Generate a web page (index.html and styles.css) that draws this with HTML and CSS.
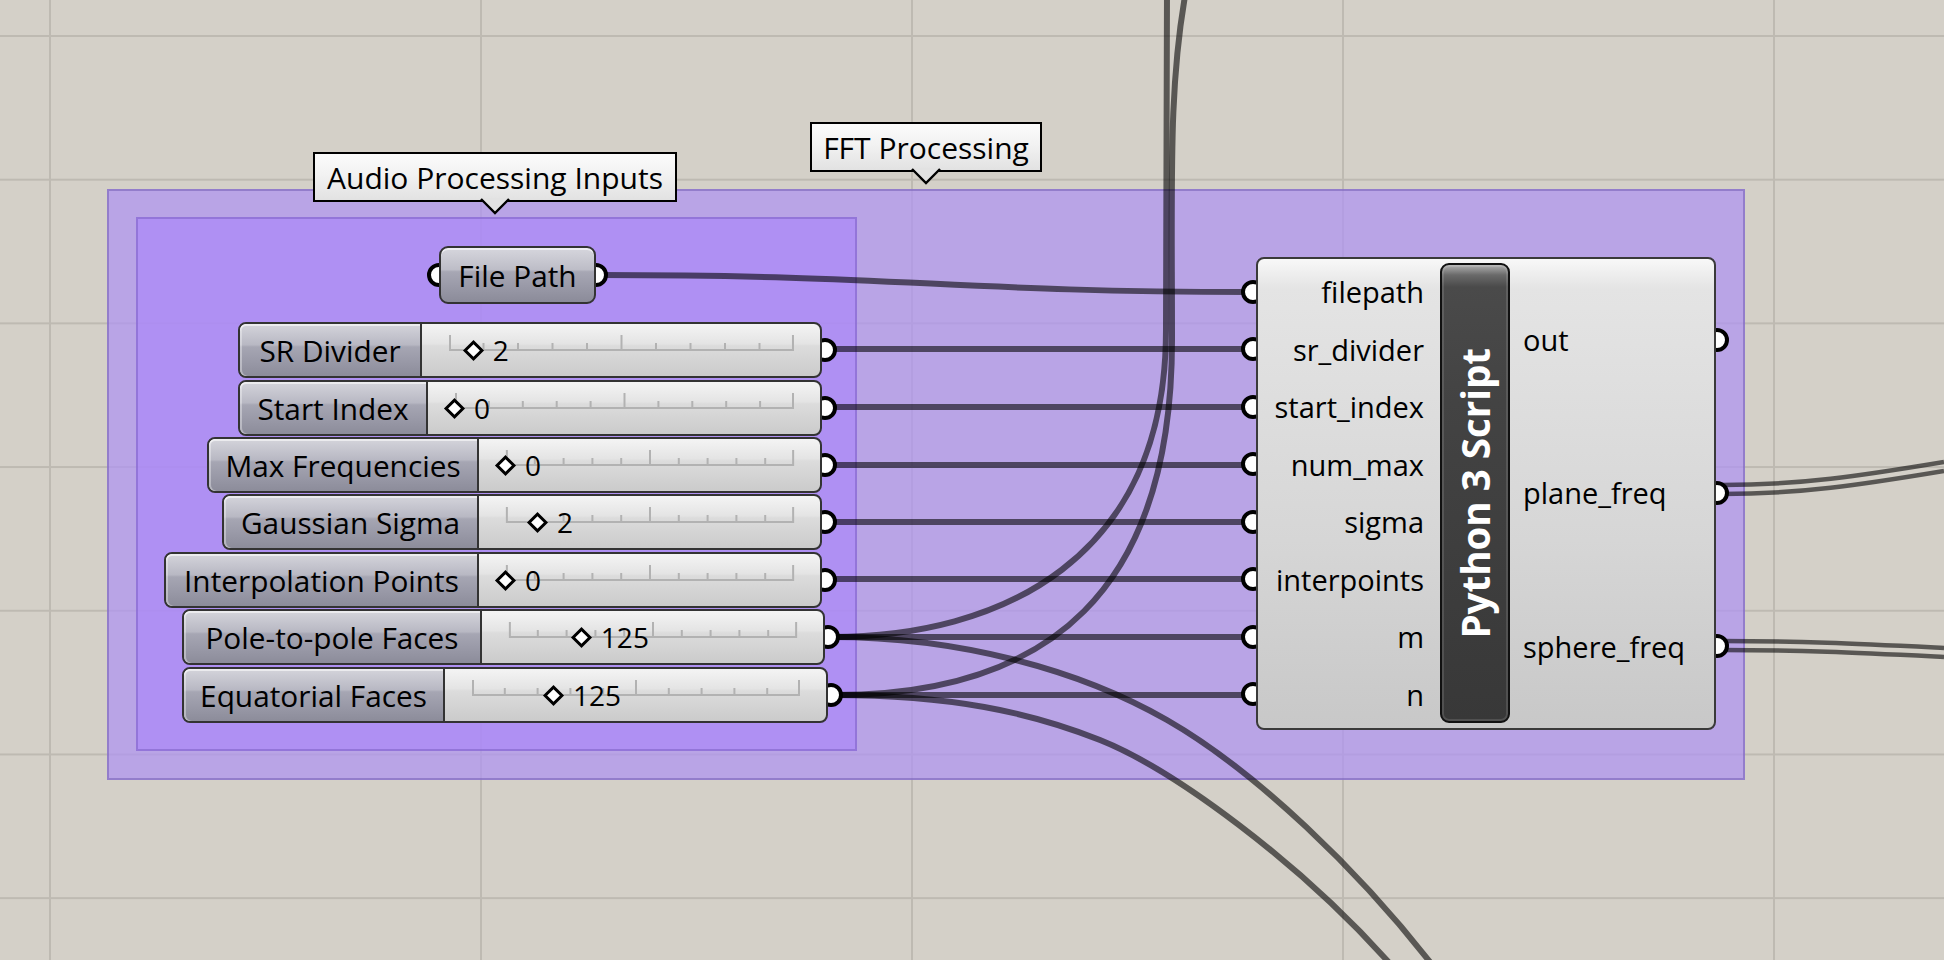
FILE: index.html
```html
<!DOCTYPE html>
<html lang="en">
<head>
<meta charset="utf-8">
<title>Grasshopper canvas</title>
<link rel="stylesheet" href="styles.css">
</head>
<body>
<div class="canvas">
  <div class="group group-outer"></div>
  <div class="group group-inner"></div>

  <svg class="wires" width="1944" height="960" viewBox="0 0 1944 960">
    <g class="wire">
      <path d="M602,275 C900,275 960,292 1250,292"/>
      <path d="M828,349 H1250"/>
      <path d="M828,407 H1250"/>
      <path d="M828,465 H1250"/>
      <path d="M828,522 H1250"/>
      <path d="M828,579 H1250"/>
      <path d="M831,637 H1250"/>
      <path d="M834,695 H1250"/>
      <path d="M831,637 C1000,637 1166,560 1166,330 C1166,160 1166,60 1167,-10"/>
      <path d="M834,695 C1050,695 1172,590 1172,340 C1172,180 1168,80 1188,-20"/>
      <path d="M831,637 C960,637 1080,670 1167,720 S1360,870 1440,975"/>
      <path d="M834,695 C950,695 1030,712 1100,740 S1300,860 1400,975"/>
    </g>
    <g class="wire wire-tree">
      <path d="M1722,485 C1800,485 1860,476 1944,462"/>
      <path d="M1722,494 C1800,494 1860,485 1944,471"/>
      <path d="M1722,641 C1800,641 1860,644 1944,648"/>
      <path d="M1722,650 C1800,650 1860,653 1944,657"/>
    </g>
  </svg>

  <div class="tag tag-audio">Audio Processing Inputs
    <svg class="tag-tip" width="32" height="18" viewBox="0 0 32 18"><polygon points="2,0 16,15 30,0" class="tip-fill"/><polyline points="2,1 16,15 30,1" class="tip-line"/></svg>
  </div>
  <div class="tag tag-fft">FFT Processing
    <svg class="tag-tip" width="32" height="18" viewBox="0 0 32 18"><polygon points="2,0 16,15 30,0" class="tip-fill"/><polyline points="2,1 16,15 30,1" class="tip-line"/></svg>
  </div>

  <div class="node param-file">
    <span class="port port-left"></span>
    <span class="port port-right"></span>
    <div class="param-body">File Path</div>
  </div>

  <div class="node slider s-sr">
    <span class="port port-out"></span>
    <div class="slider-body">
      <div class="slider-label">SR Divider</div>
      <div class="slider-value">
        <div class="track-wrap">
          <svg class="track" viewBox="0 0 100 16" preserveAspectRatio="none"><path d="M0 15 H100 M0.3 0 V16 M10 8 V16 M20 8 V16 M30 8 V16 M40 8 V16 M50 0 V16 M60 8 V16 M70 8 V16 M80 8 V16 M90 8 V16 M99.7 0 V16"/></svg>
          <div class="thumb" style="left:7.2%"><span class="knob"></span><span class="num">2</span></div>
        </div>
      </div>
    </div>
  </div>

  <div class="node slider s-start">
    <span class="port port-out"></span>
    <div class="slider-body">
      <div class="slider-label">Start Index</div>
      <div class="slider-value">
        <div class="track-wrap">
          <svg class="track" viewBox="0 0 100 16" preserveAspectRatio="none"><path d="M0 15 H100 M0.3 0 V16 M10 8 V16 M20 8 V16 M30 8 V16 M40 8 V16 M50 0 V16 M60 8 V16 M70 8 V16 M80 8 V16 M90 8 V16 M99.7 0 V16"/></svg>
          <div class="thumb" style="left:0%"><span class="knob"></span><span class="num">0</span></div>
        </div>
      </div>
    </div>
  </div>

  <div class="node slider s-max">
    <span class="port port-out"></span>
    <div class="slider-body">
      <div class="slider-label">Max Frequencies</div>
      <div class="slider-value">
        <div class="track-wrap">
          <svg class="track" viewBox="0 0 100 16" preserveAspectRatio="none"><path d="M0 15 H100 M0.3 0 V16 M10 8 V16 M20 8 V16 M30 8 V16 M40 8 V16 M50 0 V16 M60 8 V16 M70 8 V16 M80 8 V16 M90 8 V16 M99.7 0 V16"/></svg>
          <div class="thumb" style="left:0%"><span class="knob"></span><span class="num">0</span></div>
        </div>
      </div>
    </div>
  </div>

  <div class="node slider s-gauss">
    <span class="port port-out"></span>
    <div class="slider-body">
      <div class="slider-label">Gaussian Sigma</div>
      <div class="slider-value">
        <div class="track-wrap">
          <svg class="track" viewBox="0 0 100 16" preserveAspectRatio="none"><path d="M0 15 H100 M0.3 0 V16 M10 8 V16 M20 8 V16 M30 8 V16 M40 8 V16 M50 0 V16 M60 8 V16 M70 8 V16 M80 8 V16 M90 8 V16 M99.7 0 V16"/></svg>
          <div class="thumb" style="left:11.1%"><span class="knob"></span><span class="num">2</span></div>
        </div>
      </div>
    </div>
  </div>

  <div class="node slider s-interp">
    <span class="port port-out"></span>
    <div class="slider-body">
      <div class="slider-label">Interpolation Points</div>
      <div class="slider-value">
        <div class="track-wrap">
          <svg class="track" viewBox="0 0 100 16" preserveAspectRatio="none"><path d="M0 15 H100 M0.3 0 V16 M10 8 V16 M20 8 V16 M30 8 V16 M40 8 V16 M50 0 V16 M60 8 V16 M70 8 V16 M80 8 V16 M90 8 V16 M99.7 0 V16"/></svg>
          <div class="thumb" style="left:0%"><span class="knob"></span><span class="num">0</span></div>
        </div>
      </div>
    </div>
  </div>

  <div class="node slider s-pole">
    <span class="port port-out"></span>
    <div class="slider-body">
      <div class="slider-label">Pole-to-pole Faces</div>
      <div class="slider-value">
        <div class="track-wrap">
          <svg class="track" viewBox="0 0 100 16" preserveAspectRatio="none"><path d="M0 15 H100 M0.3 0 V16 M10 8 V16 M20 8 V16 M30 8 V16 M40 8 V16 M50 0 V16 M60 8 V16 M70 8 V16 M80 8 V16 M90 8 V16 M99.7 0 V16"/></svg>
          <div class="thumb" style="left:25.3%"><span class="knob"></span><span class="num">125</span></div>
        </div>
      </div>
    </div>
  </div>

  <div class="node slider s-equ">
    <span class="port port-out"></span>
    <div class="slider-body">
      <div class="slider-label">Equatorial Faces</div>
      <div class="slider-value">
        <div class="track-wrap">
          <svg class="track" viewBox="0 0 100 16" preserveAspectRatio="none"><path d="M0 15 H100 M0.3 0 V16 M10 8 V16 M20 8 V16 M30 8 V16 M40 8 V16 M50 0 V16 M60 8 V16 M70 8 V16 M80 8 V16 M90 8 V16 M99.7 0 V16"/></svg>
          <div class="thumb" style="left:25%"><span class="knob"></span><span class="num">125</span></div>
        </div>
      </div>
    </div>
  </div>

  <div class="node py">
    <div class="py-ports py-ports-in">
      <div class="py-slot"><span class="port"></span></div>
      <div class="py-slot"><span class="port"></span></div>
      <div class="py-slot"><span class="port"></span></div>
      <div class="py-slot"><span class="port"></span></div>
      <div class="py-slot"><span class="port"></span></div>
      <div class="py-slot"><span class="port"></span></div>
      <div class="py-slot"><span class="port"></span></div>
      <div class="py-slot"><span class="port"></span></div>
    </div>
    <div class="py-ports py-ports-out">
      <div class="py-slot"><span class="port"></span></div>
      <div class="py-slot"><span class="port"></span></div>
      <div class="py-slot"><span class="port"></span></div>
    </div>
    <div class="py-body">
      <div class="py-in">
        <div class="py-row">filepath</div>
        <div class="py-row">sr_divider</div>
        <div class="py-row">start_index</div>
        <div class="py-row">num_max</div>
        <div class="py-row">sigma</div>
        <div class="py-row">interpoints</div>
        <div class="py-row">m</div>
        <div class="py-row">n</div>
      </div>
      <div class="py-bar"><span class="py-title">Python 3 Script</span></div>
      <div class="py-out">
        <div class="py-row">out</div>
        <div class="py-row">plane_freq</div>
        <div class="py-row">sphere_freq</div>
      </div>
    </div>
  </div>
</div>
</body>
</html>
```

FILE: styles.css
```css
* { box-sizing: border-box; }

html, body {
  margin: 0;
  padding: 0;
  overflow: hidden;
}

body {
  font-family: "Open Sans", "Noto Sans", sans-serif;
  color: #000;
  background: #d4d0c8;
}

.canvas {
  position: relative;
  width: 1944px;
  height: 960px;
  overflow: hidden;
  background-color: #d4d0c8;
  background-image:
    linear-gradient(to right, #bebab2 0, #bebab2 2px, transparent 2px),
    linear-gradient(to bottom, #bebab2 0, #bebab2 2px, transparent 2px);
  background-size: 431px 100%, 100% 143.7px;
  background-position: 49px 0, 0 35px;
}

/* ---------- groups ---------- */
.group {
  position: absolute;
  border: 2px solid rgba(110, 85, 175, 0.5);
}

.group-outer {
  left: 107px;
  top: 189px;
  width: 1638px;
  height: 591px;
  background: rgba(176, 149, 240, 0.74);
}

.group-inner {
  left: 136px;
  top: 217px;
  width: 721px;
  height: 534px;
  background: rgba(170, 132, 250, 0.62);
  border-color: rgba(110, 80, 180, 0.42);
}

/* ---------- wires ---------- */
.wires {
  position: absolute;
  left: 0;
  top: 0;
  pointer-events: none;
}

.wire path {
  fill: none;
  stroke: rgba(0, 0, 0, 0.58);
  stroke-width: 6;
}

.wire-tree path {
  stroke-width: 4.5;
}

/* ---------- group tags ---------- */
.tag {
  position: absolute;
  height: 50px;
  display: flex;
  align-items: center;
  justify-content: center;
  border: 2px solid #000;
  background: linear-gradient(#fbfbfb 0%, #f2f2f2 45%, #e2e2e2 100%);
  font-size: 30px;
  white-space: nowrap;
}

.tag-audio {
  left: 313px;
  top: 152px;
  width: 364px;
}

.tag-fft {
  left: 810px;
  top: 122px;
  width: 232px;
}

.tag-tip {
  position: absolute;
  left: 50%;
  top: calc(100% - 2px);
  margin-left: -16px;
  overflow: visible;
}

.tip-fill { fill: #e2e2e2; }
.tip-line { fill: none; stroke: #000; stroke-width: 2.4; }

/* ---------- ports ---------- */
.port {
  position: absolute;
  width: 24px;
  height: 24px;
  border-radius: 50%;
  border: 4.5px solid #000;
  background: #fff;
}

/* ---------- nodes ---------- */
.node {
  position: absolute;
}

/* file path param */
.param-file {
  left: 439px;
  top: 246px;
  width: 157px;
  height: 58px;
}

.param-file .port-left { left: -12px; top: 17px; }
.param-file .port-right { right: -12px; top: 17px; }

.param-body {
  position: relative;
  height: 100%;
  display: flex;
  align-items: center;
  justify-content: center;
  border: 2px solid #333;
  border-radius: 9px;
  background: linear-gradient(#d6d6dd 0%, #bdbdc7 40%, #a7a7b4 44%, #9a9aa8 70%, #8b8b99 100%);
  box-shadow: inset 0 2px 0 rgba(255, 255, 255, 0.6);
  font-size: 29.8px;
}

/* sliders */
.slider {
  height: 56px;
}

.slider .port-out {
  right: -15px;
  top: 16px;
}

.slider-body {
  position: relative;
  height: 100%;
  display: flex;
  border: 2px solid #333;
  border-radius: 8px;
  overflow: hidden;
  background: linear-gradient(#f4f4f4 0%, #e4e4e4 38%, #dcdcdc 42%, #cbcbcb 100%);
}

.slider-label {
  flex: none;
  display: flex;
  align-items: center;
  justify-content: center;
  border-right: 2px solid #333;
  border-radius: 6px 0 0 6px;
  background: linear-gradient(#d4d4db 0%, #b8b8c3 40%, #a6a6b3 44%, #9a9aa8 70%, #8c8c9a 100%);
  box-shadow: inset 0 2px 0 rgba(255, 255, 255, 0.55), inset 2px 0 0 rgba(255, 255, 255, 0.35);
  font-size: 29.8px;
  white-space: nowrap;
}

.slider-value {
  flex: 1;
  display: flex;
  align-items: center;
  padding: 0 26px 0 27px;
}

.track-wrap {
  position: relative;
  flex: 1;
  height: 16px;
  margin-bottom: 14px;
}

.track {
  display: block;
  width: 100%;
  height: 16px;
  overflow: visible;
}

.track path {
  fill: none;
  stroke: #b2b2b2;
  stroke-width: 2;
  vector-effect: non-scaling-stroke;
}

.thumb {
  position: absolute;
  top: 15px;
  display: flex;
  align-items: center;
  transform: translate(-11px, -50%);
}

.knob {
  width: 15px;
  height: 15px;
  margin: 0 3px;
  border: 3.5px solid #000;
  background: #fff;
  transform: rotate(45deg);
}

.num {
  margin-left: 9px;
  font-size: 28px;
  line-height: 1;
  padding-top: 0;
}

.s-sr     { left: 238px; top: 322px; width: 584px; }
.s-start  { left: 238px; top: 380px; width: 584px; }
.s-max    { left: 207px; top: 437px; width: 615px; }
.s-gauss  { left: 222px; top: 494px; width: 600px; }
.s-interp { left: 164px; top: 552px; width: 658px; }
.s-pole   { left: 182px; top: 609px; width: 643px; }
.s-equ    { left: 182px; top: 667px; width: 646px; }

.s-sr .slider-label     { width: 182px; }
.s-start .slider-label  { width: 188px; }
.s-max .slider-label    { width: 270px; }
.s-gauss .slider-label  { width: 255px; }
.s-interp .slider-label { width: 313px; }
.s-pole .slider-label   { width: 298px; }
.s-equ .slider-label    { width: 261px; }

/* python component */
.py {
  left: 1256px;
  top: 257px;
  width: 460px;
  height: 473px;
}

.py-ports {
  position: absolute;
  top: 6px;
  bottom: 7px;
  width: 24px;
  display: flex;
  flex-direction: column;
}

.py-ports-in { left: -15px; }
.py-ports-out { right: -13px; }

.py-slot {
  position: relative;
  flex: 1;
  display: flex;
  align-items: center;
}

.py-slot .port {
  position: static;
}

.py-body {
  position: relative;
  height: 100%;
  display: flex;
  padding: 4px 0 5px;
  border: 2px solid #3a3a3a;
  border-radius: 8px;
  background: linear-gradient(#f8f8f8 0px, #e9e9e9 22px, #e4e4e4 30px, #d6d6d6 60%, #c8c8c8 100%);
}

.py-in {
  width: 182px;
  display: flex;
  flex-direction: column;
  text-align: right;
  padding-right: 16px;
}

.py-out {
  flex: 1;
  display: flex;
  flex-direction: column;
  padding-left: 13px;
}

.py-row {
  flex: 1;
  display: flex;
  align-items: center;
  font-size: 29px;
  white-space: nowrap;
}

.py-in .py-row {
  justify-content: flex-end;
}

.py-bar {
  width: 70px;
  display: flex;
  align-items: center;
  justify-content: center;
  border: 2px solid #111;
  border-radius: 9px;
  background: linear-gradient(#b0b0b0 0px, #6a6a6a 10px, #4a4a4a 22px, #434343 30%, #383838 100%);
  box-shadow: inset 0 0 0 2px rgba(255, 255, 255, 0.12);
}

.py-title {
  writing-mode: vertical-rl;
  transform: rotate(180deg);
  color: #fff;
  font-weight: 700;
  font-size: 38.5px;
  white-space: nowrap;
  line-height: 1;
}
```
